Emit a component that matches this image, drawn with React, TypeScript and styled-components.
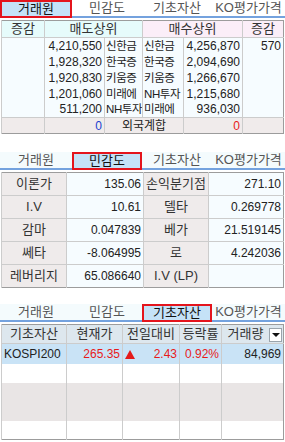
import React from 'react';
import styled, { createGlobalStyle } from 'styled-components';

const GlobalStyle = createGlobalStyle`
    html, body {
        margin: 0;
        padding: 0;
        background: #ffffff;
    }
    body {
        font-family: 'Liberation Sans', 'Noto Sans CJK KR', sans-serif;
        font-size: 12px;
        color: #222222;
    }
`;

const TAB_LABELS = ['거래원', '민감도', '기초자산', 'KO평가가격'];
const TAB_WIDTHS = [72, 70, 70, 73];

const Page = styled.div`
    width: 285px;
    height: 442px;
    overflow: hidden;
    display: flex;
    flex-direction: column;
`;

const Section = styled.section<{ $gap: number }>`
    display: flex;
    flex-direction: column;
    margin-top: ${(p) => p.$gap}px;
`;

const TabRow = styled.div<{ $tint: boolean }>`
    display: flex;
    height: 18px;
    background: ${(p) => (p.$tint ? '#f4fbfd' : '#ffffff')};
`;

const Tab = styled.div<{ $active: boolean }>`
    box-sizing: border-box;
    height: 18px;
    display: flex;
    align-items: center;
    justify-content: center;
    font-size: 13px;
    line-height: 14px;
    color: ${(p) => (p.$active ? '#111111' : '#555555')};
    background: ${(p) => (p.$active ? '#c5e2f7' : 'transparent')};
    border: ${(p) => (p.$active ? '2px solid #e4141c' : 'none')};
    border-bottom: 2px solid ${(p) => (p.$active ? '#e4141c' : '#74a2de')};
`;

const Grid = styled.table`
    margin: 2px 1px 0 1px;
    width: 283px;
    table-layout: fixed;
    border-collapse: collapse;
    border: 1px solid #9c9c9c;
    td,
    th {
        padding: 0 2px;
        border-left: 1px solid #cccccc;
        white-space: nowrap;
        overflow: hidden;
        font-weight: normal;
        line-height: 14px;
    }
`;

const HeadCell = styled.th<{ $bg: string; $padRight?: number }>`
    background: ${(p) => p.$bg};
    text-align: center;
    color: #333333;
    font-size: 13px;
    border-bottom: 1px solid #cccccc;
    position: relative;
    padding-right: ${(p) => p.$padRight ?? 2}px !important;
`;

const Cell = styled.td<{ $align?: string; $color?: string }>`
    text-align: ${(p) => p.$align || 'right'};
    color: ${(p) => p.$color || '#222222'};
`;

const NameCell = styled.td`
    text-align: left;
    font-size: 11.5px;
    letter-spacing: -0.4px;
    padding: 0 0 0 1px !important;
`;

const Row = styled.tr<{ $h: number; $bg?: string; $line?: boolean }>`
    height: ${(p) => p.$h}px;
    background: ${(p) => p.$bg || 'transparent'};
    td {
        border-top: ${(p) => (p.$line ? '1px solid #cccccc' : 'none')};
    }
`;

const LabelCell = styled.td`
    text-align: center !important;
    background: #efebeb;
    color: #333333;
    font-size: 13px;
`;

const Arrow = styled.span`
    float: left;
    margin-top: 3px;
    width: 0;
    height: 0;
    border-left: 5px solid transparent;
    border-right: 5px solid transparent;
    border-bottom: 9px solid #e41a1a;
`;

const DropButton = styled.span`
    position: absolute;
    right: 1px;
    top: 3px;
    width: 13px;
    height: 14px;
    box-sizing: border-box;
    border: 1px solid #9aa4ac;
    background: #ffffff;
    display: flex;
    align-items: center;
    justify-content: center;
    &::after {
        content: '';
        border-left: 4px solid transparent;
        border-right: 4px solid transparent;
        border-top: 4px solid #111111;
    }
`;

const Tabs: React.FC<{ active: number; tint: boolean }> = ({ active, tint }) => (
    <TabRow $tint={tint}>
        {TAB_LABELS.map((label, i) => (
            <Tab key={label} $active={i === active} style={{ width: TAB_WIDTHS[i] }}>
                {label}
            </Tab>
        ))}
    </TabRow>
);

const sells = [
    ['4,210,550', '신한금'],
    ['1,928,320', '한국증'],
    ['1,920,830', '키움증'],
    ['1,201,060', '미래에'],
    ['511,200', 'NH투자'],
];
const buys = [
    ['신한금', '4,256,870'],
    ['한국증', '2,094,690'],
    ['키움증', '1,266,670'],
    ['NH투자', '1,215,680'],
    ['미래에', '936,030'],
];

const greeks = [
    ['이론가', '135.06', '손익분기점', '271.10'],
    ['I.V', '10.61', '델타', '0.269778'],
    ['감마', '0.047839', '베가', '21.519145'],
    ['쎄타', '-8.064995', '로', '4.242036'],
    ['레버리지', '65.086640', 'I.V (LP)', ''],
];

const BODY_BG = '#f6fcff';
const RED = '#e81a1a';

const EmptyRow: React.FC<{ bg: string }> = ({ bg }) => (
    <Row $h={19} $bg={bg}>
        <Cell />
        <Cell />
        <Cell />
        <Cell />
        <Cell />
    </Row>
);

const App: React.FC = () => {
    return (
        <Page>
            <GlobalStyle />
            <Section $gap={0}>
                <Tabs active={0} tint={false} />
                <Grid>
                    <colgroup>
                        <col style={{ width: 43 }} />
                        <col style={{ width: 60 }} />
                        <col style={{ width: 38 }} />
                        <col style={{ width: 41 }} />
                        <col style={{ width: 59 }} />
                        <col />
                    </colgroup>
                    <tbody>
                        <Row $h={17}>
                            <HeadCell $bg="#e6fbfb">증감</HeadCell>
                            <HeadCell $bg="#e6fbfb" colSpan={2}>매도상위</HeadCell>
                            <HeadCell $bg="#fbeef8" colSpan={2}>매수상위</HeadCell>
                            <HeadCell $bg="#fbeef8">증감</HeadCell>
                        </Row>
                        {sells.map((s, i) => (
                            <Row key={s[1]} $h={16} $bg={BODY_BG}>
                                <Cell />
                                <Cell>{s[0]}</Cell>
                                <NameCell>{s[1]}</NameCell>
                                <NameCell>{buys[i][0]}</NameCell>
                                <Cell>{buys[i][1]}</Cell>
                                <Cell>{i === 0 ? '570' : ''}</Cell>
                            </Row>
                        ))}
                        <Row $h={16} $bg="#f0ebeb" $line>
                            <Cell />
                            <Cell $color="#1a3fcf">0</Cell>
                            <Cell $align="center" colSpan={2}>외국계합</Cell>
                            <Cell $color={RED}>0</Cell>
                            <Cell />
                        </Row>
                    </tbody>
                </Grid>
            </Section>

            <Section $gap={18}>
                <Tabs active={1} tint />
                <Grid>
                    <colgroup>
                        <col style={{ width: 65 }} />
                        <col style={{ width: 77 }} />
                        <col style={{ width: 65 }} />
                        <col />
                    </colgroup>
                    <tbody>
                        {greeks.map((g, i) => (
                            <Row key={g[0]} $h={23} $bg={BODY_BG} $line={i > 0}>
                                <LabelCell>{g[0]}</LabelCell>
                                <Cell>{g[1]}</Cell>
                                <LabelCell>{g[2]}</LabelCell>
                                <Cell>{g[3]}</Cell>
                            </Row>
                        ))}
                    </tbody>
                </Grid>
            </Section>

            <Section $gap={16}>
                <Tabs active={2} tint />
                <Grid>
                    <colgroup>
                        <col style={{ width: 65 }} />
                        <col style={{ width: 56 }} />
                        <col style={{ width: 57 }} />
                        <col style={{ width: 42 }} />
                        <col />
                    </colgroup>
                    <tbody>
                        <Row $h={19}>
                            <HeadCell $bg="#dde7ee">기초자산</HeadCell>
                            <HeadCell $bg="#dde7ee">현재가</HeadCell>
                            <HeadCell $bg="#dde7ee">전일대비</HeadCell>
                            <HeadCell $bg="#dde7ee">등락률</HeadCell>
                            <HeadCell $bg="#dde7ee" $padRight={16}>
                                거래량
                                <DropButton />
                            </HeadCell>
                        </Row>
                        <Row $h={20} $bg="#c9e3f6">
                            <Cell $align="left">KOSPI200</Cell>
                            <Cell $color={RED}>265.35</Cell>
                            <Cell $color={RED}>
                                <Arrow />
                                2.43
                            </Cell>
                            <Cell $color={RED}>0.92%</Cell>
                            <Cell>84,969</Cell>
                        </Row>
                        <EmptyRow bg="#ffffff" />
                        <EmptyRow bg="#e9e5e5" />
                        <EmptyRow bg="#e9e5e5" />
                        <EmptyRow bg="#ffffff" />
                    </tbody>
                </Grid>
            </Section>
        </Page>
    );
};

export default App;
